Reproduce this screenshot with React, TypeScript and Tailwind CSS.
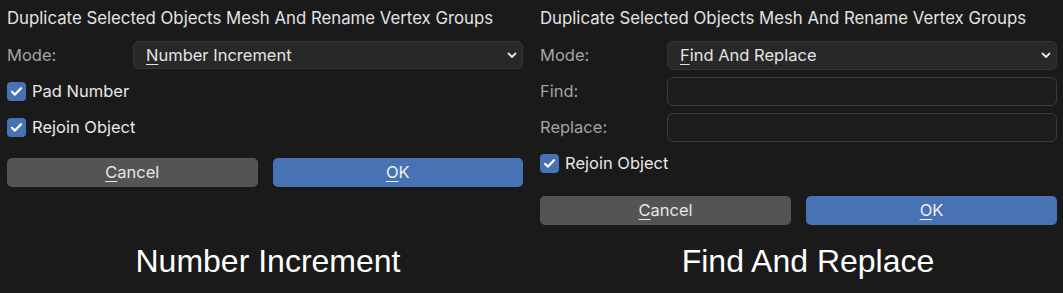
import React from "react";

const font = { fontFamily: "Inter, 'Noto Sans', sans-serif" };

function Chevron() {
  return (
    <svg width="10" height="7" viewBox="0 0 10 7" className="shrink-0">
      <path d="M1.5 1.5 L5 5 L8.5 1.5" fill="none" stroke="#e6e6e6" strokeWidth="1.8" strokeLinecap="round" strokeLinejoin="round" />
    </svg>
  );
}

function Check() {
  return (
    <div className="w-[19px] h-[19px] rounded-[4px] bg-[#4772b3] flex items-center justify-center shrink-0">
      <svg width="13" height="11" viewBox="0 0 13 11">
        <path d="M2 5.8 L5 8.6 L11 2.2" fill="none" stroke="#ffffff" strokeWidth="2.2" strokeLinecap="round" strokeLinejoin="round" />
      </svg>
    </div>
  );
}

function Mn({ c }: { c: string }) {
  return <span className="underline underline-offset-[3px] decoration-1">{c}</span>;
}

function Dropdown({ first, rest, h }: { first: string; rest: string; h: string }) {
  return (
    <div className={`${h} rounded-[6px] bg-[#282828] border border-[#363636] flex items-center pl-[12px] pr-[5px] text-[16.5px] text-[#e4e4e4]`}>
      <span className="flex-1">
        <Mn c={first} />
        {rest}
      </span>
      <Chevron />
    </div>
  );
}

function Field() {
  return <div className="h-[29px] rounded-[6px] bg-[#1d1d1d] border border-[#3c3c3c]" />;
}

function CheckRow({ label, h }: { label: string; h: string }) {
  return (
    <div className={`${h} flex items-center gap-[6px] text-[16.5px] text-[#e8e8e8]`}>
      <Check />
      <span>{label}</span>
    </div>
  );
}

function Buttons() {
  return (
    <div className="grid grid-cols-2 gap-x-[15px] h-[29px] text-[16.5px]">
      <div className="rounded-[5px] bg-[#545454] flex items-center justify-center text-[#e6e6e6]">
        <span>
          <Mn c="C" />
          ancel
        </span>
      </div>
      <div className="rounded-[5px] bg-[#4772b3] flex items-center justify-center text-[#f0f0f0]">
        <span>
          <Mn c="O" />K
        </span>
      </div>
    </div>
  );
}

function Title() {
  return (
    <div className="h-[28px] flex items-center text-[16.8px] text-[#e2e2e2]">
      Duplicate Selected Objects Mesh And Rename Vertex Groups
    </div>
  );
}

export default function App() {
  return (
    <div
      className="w-[1063px] h-[293px] bg-[#1a1a1a] pl-[7px] pr-[6px] pt-[5px] grid grid-cols-[516px_517px] grid-rows-[auto_auto] content-start gap-x-[17px] overflow-hidden"
      style={font}
    >
      {/* Left panel */}
      <div className="flex flex-col">
        <Title />
        <div className="mt-[8px] grid grid-cols-[126px_1fr] items-center">
          <span className="text-[16.5px] text-[#a3a3a3]">Mode:</span>
          <Dropdown first="N" rest="umber Increment" h="h-[28px]" />
        </div>
        <div className="mt-[8px]">
          <CheckRow label="Pad Number" h="h-[28px]" />
        </div>
        <div className="mt-[8px]">
          <CheckRow label="Rejoin Object" h="h-[28px]" />
        </div>
        <div className="mt-[17px]">
          <Buttons />
        </div>
      </div>

      {/* Right panel */}
      <div className="flex flex-col">
        <Title />
        <div className="mt-[8px] grid grid-cols-[127px_1fr] items-center gap-y-[7px]">
          <span className="text-[16.5px] text-[#a3a3a3]">Mode:</span>
          <Dropdown first="F" rest="ind And Replace" h="h-[29px]" />
          <span className="text-[16.5px] text-[#a3a3a3]">Find:</span>
          <Field />
          <span className="text-[16.5px] text-[#a3a3a3]">Replace:</span>
          <Field />
        </div>
        <div className="mt-[7px]">
          <CheckRow label="Rejoin Object" h="h-[29px]" />
        </div>
        <div className="mt-[18px]">
          <Buttons />
        </div>
      </div>

      {/* Captions */}
      <div
        className="mt-[20px] pl-[6px] text-center text-[32px] leading-[32px] text-white"
        style={{ fontFamily: "'Liberation Sans', Arial, sans-serif" }}
      >
        Number Increment
      </div>
      <div
        className="mt-[20px] pl-[19px] text-center text-[32px] leading-[32px] text-white"
        style={{ fontFamily: "'Liberation Sans', Arial, sans-serif" }}
      >
        Find And Replace
      </div>
    </div>
  );
}
